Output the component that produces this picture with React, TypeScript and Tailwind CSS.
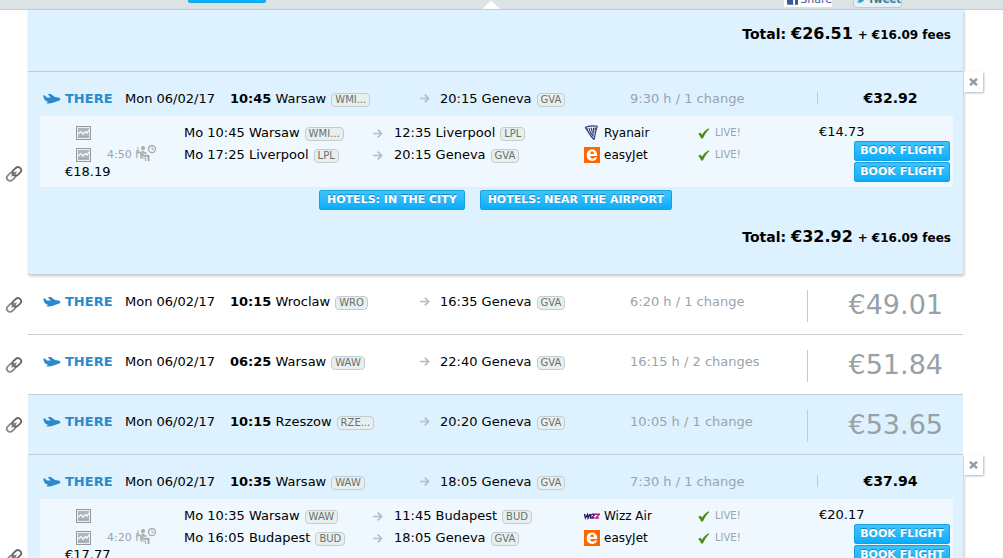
import type { ReactNode } from "react";

interface Leg {
  from: string;
  fromCode: string;
  to: string;
  toCode: string;
  airline: "Ryanair" | "easyJet" | "Wizz Air";
  wait?: string;
}

interface Flight {
  depart: string;
  city: string;
  code: string;
  arrive: string;
  arriveCode: string;
  duration: string;
  price: string;
  highlighted?: boolean;
  legs?: Leg[];
  firstPrice?: string;
  lastPrice?: string;
}

const flights: Flight[] = [
  {
    depart: "10:45", city: "Warsaw", code: "WMI...", arrive: "20:15 Geneva", arriveCode: "GVA",
    duration: "9:30 h / 1 change", price: "€32.92", firstPrice: "€14.73", lastPrice: "€18.19",
    legs: [
      { from: "Mo 10:45 Warsaw", fromCode: "WMI...", to: "12:35 Liverpool", toCode: "LPL", airline: "Ryanair" },
      { from: "Mo 17:25 Liverpool", fromCode: "LPL", to: "20:15 Geneva", toCode: "GVA", airline: "easyJet", wait: "4:50 h" },
    ],
  },
  { depart: "10:15", city: "Wroclaw", code: "WRO", arrive: "16:35 Geneva", arriveCode: "GVA", duration: "6:20 h / 1 change", price: "€49.01" },
  { depart: "06:25", city: "Warsaw", code: "WAW", arrive: "22:40 Geneva", arriveCode: "GVA", duration: "16:15 h / 2 changes", price: "€51.84" },
  { depart: "10:15", city: "Rzeszow", code: "RZE...", arrive: "20:20 Geneva", arriveCode: "GVA", duration: "10:05 h / 1 change", price: "€53.65", highlighted: true },
  {
    depart: "10:35", city: "Warsaw", code: "WAW", arrive: "18:05 Geneva", arriveCode: "GVA",
    duration: "7:30 h / 1 change", price: "€37.94", firstPrice: "€20.17", lastPrice: "€17.77",
    legs: [
      { from: "Mo 10:35 Warsaw", fromCode: "WAW", to: "11:45 Budapest", toCode: "BUD", airline: "Wizz Air" },
      { from: "Mo 16:05 Budapest", fromCode: "BUD", to: "18:05 Geneva", toCode: "GVA", airline: "easyJet", wait: "4:20 h" },
    ],
  },
];

function Code({ children }: { children: ReactNode }) {
  return (
    <span className="ml-[5px] inline-block rounded-[4px] border border-[#c5cccc] bg-[#e8efef] px-[3px] text-[10px] leading-3 text-[#6a6f70]">
      {children}
    </span>
  );
}

function PlaneIcon() {
  return (
    <svg width="18" height="12" viewBox="0 0 18 12" fill="#2b8acb" aria-hidden="true">
      <path d="M0.2 2.6H2L3.8 4.4L7.6 4.6L4.8 1H7.8L12 4L15.2 4.4C16.8 4.8 17.6 5.6 17.4 6.4C17 7.2 15.6 7.8 14 8.3C11.4 9.5 8.6 10.4 5.6 10.4L3.2 10.2L5 8.8C2.2 8.4 0.8 6.4 0.2 2.6Z" />
    </svg>
  );
}

function ArrowIcon() {
  return (
    <svg width="10" height="9" viewBox="0 0 10 9" fill="none" stroke="#b3bec6" strokeWidth="1.7" aria-hidden="true">
      <path d="M0 4.5H8.5M4.8 0.7L8.6 4.5L4.8 8.3" />
    </svg>
  );
}

function LinkIcon() {
  return (
    <svg width="18" height="18" viewBox="0 0 18 18" fill="none" aria-hidden="true">
      <g transform="rotate(-43 9 9)" strokeWidth="1.8">
        <rect x="0.4" y="5.8" width="9.6" height="6.4" rx="3.2" stroke="#8b8b8b" />
        <rect x="8" y="5.8" width="9.6" height="6.4" rx="3.2" stroke="#666" />
        <path d="M5.5 9H12.5" stroke="#777" strokeWidth="1.2" />
      </g>
    </svg>
  );
}

function ChartIcon() {
  return (
    <svg width="15" height="14" viewBox="0 0 15 14" fill="none" aria-hidden="true">
      <rect x="0.5" y="0.5" width="14" height="13" fill="#eceeef" stroke="#969a9c" />
      <rect x="2" y="2" width="11" height="10" fill="#b3b6b8" />
      <path d="M2 8L5 5.5L7 8L9.5 5.5L11 7L13 4" stroke="#fff" strokeWidth="1.2" />
      <path d="M2 10.5H13" stroke="#999d9f" strokeDasharray="1 1" />
    </svg>
  );
}

function WaitIcon() {
  return (
    <svg width="20" height="17" viewBox="0 0 20 17" fill="none" stroke="#a5adb2" aria-hidden="true">
      <circle cx="6" cy="3" r="2" fill="#a5adb2" stroke="none" />
      <path d="M1 2V8.5M1 5L4 8.5" />
      <path d="M5.5 5.5V10.5L11.5 11V16" strokeWidth="2" />
      <path d="M6 7L9.5 8.5" strokeWidth="1.5" />
      <path d="M3.5 7L4 13H8.5V16" />
      <circle cx="15" cy="4" r="3.5" strokeWidth="1.3" />
      <path d="M15 2V4.3H17" />
    </svg>
  );
}

function CheckIcon() {
  return (
    <svg width="12" height="11" viewBox="0 0 12 11" aria-hidden="true">
      <path d="M0.3 6L2.3 4.6L4 6.8C5.6 4 7.8 1.6 10.8 0.2L11.3 1C8.7 3.6 6.6 6.7 4.9 10.4H3.2C2.5 8.8 1.6 7.4 0.3 6Z" fill="#4f8a10" />
    </svg>
  );
}

function AirlineLogo({ name }: { name: Leg["airline"] }) {
  if (name === "easyJet") {
    return (
      <svg width="16" height="16" viewBox="0 0 16 16" aria-hidden="true">
        <rect width="16" height="16" fill="#ff6600" />
        <path fillRule="evenodd" d="M8.2 2.4C11.4 2.4 13.3 4.7 13.2 8.9H6.3C6.4 10.6 7.3 11.5 8.8 11.5C9.9 11.5 10.6 11.1 11.1 10.3H13C12.4 12.6 10.8 13.9 8.4 13.9C4.9 13.9 2.7 11.7 2.7 8.2C2.7 4.8 4.9 2.4 8.2 2.4ZM6.4 7H9.8C9.8 5.3 9.3 4.3 8.2 4.3C7.1 4.3 6.5 5.3 6.4 7Z" fill="#fff" />
      </svg>
    );
  }
  if (name === "Ryanair") {
    return (
      <svg width="16" height="16" viewBox="0 0 16 16" fill="none" stroke="#27376f" aria-hidden="true">
        <path d="M1 2.5C4 0.8 9 0.6 13.5 1.2M1 2.5C2.2 3.3 3 4.5 3.5 6M3 3.5C4 7.5 6 10.5 10 14.5M5 3C5.5 6.5 7 9 9.5 11.5M7.2 2.8C7.4 5.5 8.2 7.5 9.8 9.5M9.4 2.8C9.3 5 9.6 6.3 10.3 7.6M13.5 1.2C11.2 4.8 11.8 8.5 10 14.5M11.4 2.5L10.8 5" strokeWidth="1.1" />
      </svg>
    );
  }
  return (
    <svg width="16" height="16" viewBox="0 0 16 16" fill="none" strokeWidth="1.4" aria-hidden="true">
      <path d="M0.5 6L1.4 10L3.5 6.5L4 10L6 6M7.2 6L6.2 10.5" stroke="#2b1567" />
      <path d="M7.8 6.3H11L7.5 10H10.5" stroke="#641774" />
      <path d="M12 6.3H15.5L11.8 10H15" stroke="#c81982" />
    </svg>
  );
}

function BlueButton({ children, wide }: { children: ReactNode; wide?: boolean }) {
  return (
    <button
      type="button"
      className={`h-5 cursor-pointer rounded-[2px] border border-[#16a0e0] bg-linear-to-b from-[#3cc3ff] to-[#06adf8] text-[11px] leading-4 font-bold whitespace-nowrap text-white text-shadow-[0_-1px_0_#1585bd] hover:to-[#0499dc] ${wide ? "px-[7px]" : "px-[5px]"}`}
    >
      {children}
    </button>
  );
}

function Total({ amount }: { amount: string }) {
  return (
    <p className="pr-3 pb-[26px] text-right text-sm leading-5 font-bold">
      Total: <span className="text-base leading-5">{amount}</span> <span className="text-xs leading-5">+ €16.09 fees</span>
    </p>
  );
}

function Summary({ flight }: { flight: Flight }) {
  const open = flight.legs !== undefined;

  return (
    <div className={`grid grid-cols-[22px_60px_105px_190px_20px_190px_1fr_156px] pl-[15px] ${open ? "h-11" : "h-[59px]"}`}>
      <span className="pt-[21px]"><PlaneIcon /></span>
      <span className="pt-[17px] font-bold text-[#2b8acb]">THERE</span>
      <span className="pt-[17px]">Mon 06/02/17</span>
      <span className="pt-[17px]"><b>{flight.depart}</b> {flight.city}<Code>{flight.code}</Code></span>
      <span className="pt-[22px]"><ArrowIcon /></span>
      <span className="pt-[17px]">{flight.arrive}<Code>{flight.arriveCode}</Code></span>
      <span className="pt-[17px] text-[#98a4ad]">{flight.duration}</span>
      {open ? (
        <span className="mt-5 ml-[10px] h-3 border-l border-[#bccad3] text-center text-sm leading-3 font-bold">{flight.price}</span>
      ) : (
        <span className="mt-[15px] h-8 border-l border-[#c4cbcf] pr-5 text-right text-[27px] leading-[30px] text-[#98a1a6]">{flight.price}</span>
      )}
    </div>
  );
}

function Details({ flight, legs }: { flight: Flight; legs: Leg[] }) {
  return (
    <div className="mr-[10px] ml-3 flex bg-[#eff8ff]">
      <div className="flex-1 pt-[6px]">
        {legs.map((leg) => (
          <div key={leg.from} className="grid h-[22px] grid-cols-[31px_77px_189px_21px_190px_20px_94px_1fr] items-center pl-9">
            <ChartIcon />
            <span className="flex">
              {leg.wait && (
                <>
                  <span className="w-[30px] text-[11px] leading-5 whitespace-nowrap text-[#98a4ad]">{leg.wait}</span>
                  <WaitIcon />
                </>
              )}
            </span>
            <span>{leg.from}<Code>{leg.fromCode}</Code></span>
            <ArrowIcon />
            <span>{leg.to}<Code>{leg.toCode}</Code></span>
            <AirlineLogo name={leg.airline} />
            <span className="text-xs">{leg.airline}</span>
            <span className="flex items-center gap-[5px] text-[10px] text-[#98a4ad]"><CheckIcon />LIVE!</span>
          </div>
        ))}
        <p className="pl-[25px] leading-3">{flight.lastPrice}</p>
      </div>
      <div className="flex w-[134px] flex-col items-end gap-px pr-[3px] pb-[5px]">
        <p className="w-full pt-2 leading-4">{flight.firstPrice}</p>
        {legs.map((leg) => <BlueButton key={leg.from}>BOOK FLIGHT</BlueButton>)}
      </div>
    </div>
  );
}

function FlightItem({ flight }: { flight: Flight }) {
  const { legs } = flight;

  return (
    <li className="flex">
      <a href="#" aria-label="Link to this flight" className="flex w-7 items-center pl-[5px]"><LinkIcon /></a>
      <article className={`flex-1 border-b border-[#c3ced5] ${legs || flight.highlighted ? "bg-[#def1fe]" : ""} ${legs ? "shadow-[1px_1px_3px_#c9bccb]" : ""}`}>
        <Summary flight={flight} />
        {legs && (
          <>
            <Details flight={flight} legs={legs} />
            <div className="flex justify-center gap-[15px] pt-[3px] pb-[17px]">
              <BlueButton wide>HOTELS: IN THE CITY</BlueButton>
              <BlueButton wide>HOTELS: NEAR THE AIRPORT</BlueButton>
            </div>
            <Total amount={flight.price} />
          </>
        )}
      </article>
      <div className="w-10 pl-px">
        {legs && (
          <button type="button" aria-label="Close" className="flex h-5 w-[19px] cursor-pointer items-center justify-center bg-white shadow-[1px_1px_2px_#b5b5bd]">
            <svg width="9" height="8" viewBox="0 0 9 8" stroke="#929ba1" strokeWidth="2.4" aria-hidden="true">
              <path d="M1 0.8L8 7.2M8 0.8L1 7.2" />
            </svg>
          </button>
        )}
      </div>
    </li>
  );
}

export default function App() {
  return (
    <div className="flex h-screen flex-col overflow-hidden bg-white font-['DejaVu_Sans',sans-serif] text-[13px] leading-5 text-black">
      <header className="flex h-[10px] shrink-0 items-end overflow-hidden border-b border-[#c3cdd1] bg-[#dce3e5] pr-[101px] pl-[188px]">
        <button type="button" aria-label="Search" className="mb-[6px] h-5 w-[78px] rounded-[2px] border border-[#16a0e0] bg-[#06b5ff]" />
        <svg className="ml-[216px]" width="18" height="9" viewBox="0 0 18 9" aria-hidden="true">
          <path d="M0 9L9 0.5L18 9Z" fill="#fff" />
        </svg>
        <div className="ml-auto flex items-end gap-[21px]">
          <button type="button" className="mb-[2px] flex h-5 w-12 items-end gap-0.5 bg-white pb-px pl-[3px] text-[11px] leading-3 text-[#3b5998]">
            <svg width="12" height="13" viewBox="0 0 12 13" aria-hidden="true">
              <rect width="12" height="12" rx="1" fill="#3b5998" />
              <path d="M6.5 12V7H5V5H6.5V3.5C6.5 2 7.6 1.2 10 1.5V3.2C9 3.1 8.6 3.4 8.6 4.2V5H10.5V7H8.6V12Z" fill="#fff" />
            </svg>
            Share
          </button>
          <button type="button" className="mb-px flex h-5 w-[49px] items-end gap-0.5 rounded-[3px] border border-[#b3cfdb] bg-[#e5f1f6] pb-px pl-[2px] text-[10px] leading-3 font-bold text-[#3c7c93]">
            <svg width="11" height="12" viewBox="0 0 11 12" aria-hidden="true">
              <path d="M0 8C2 8 3 7.6 3.5 7C1.8 6.5 1 5 0.8 1.5C2 3.2 3.5 3.8 5.2 3.8C5.2 1.2 7.8 0 9.5 1.8L11 1.5L9.8 3.2C9.8 7.5 5.5 10.8 0 8Z" fill="#2ba0cf" />
            </svg>
            Tweet
          </button>
        </div>
      </header>

      <ul>
        <li className="flex pr-10 pl-7">
          <article className="flex-1 border-b border-[#c3ced5] bg-[#def1fe] pt-[14px] shadow-[1px_1px_3px_#c9bccb]">
            <Total amount="€26.51" />
          </article>
        </li>
        {flights.map((flight) => <FlightItem key={flight.price} flight={flight} />)}
      </ul>
    </div>
  );
}
